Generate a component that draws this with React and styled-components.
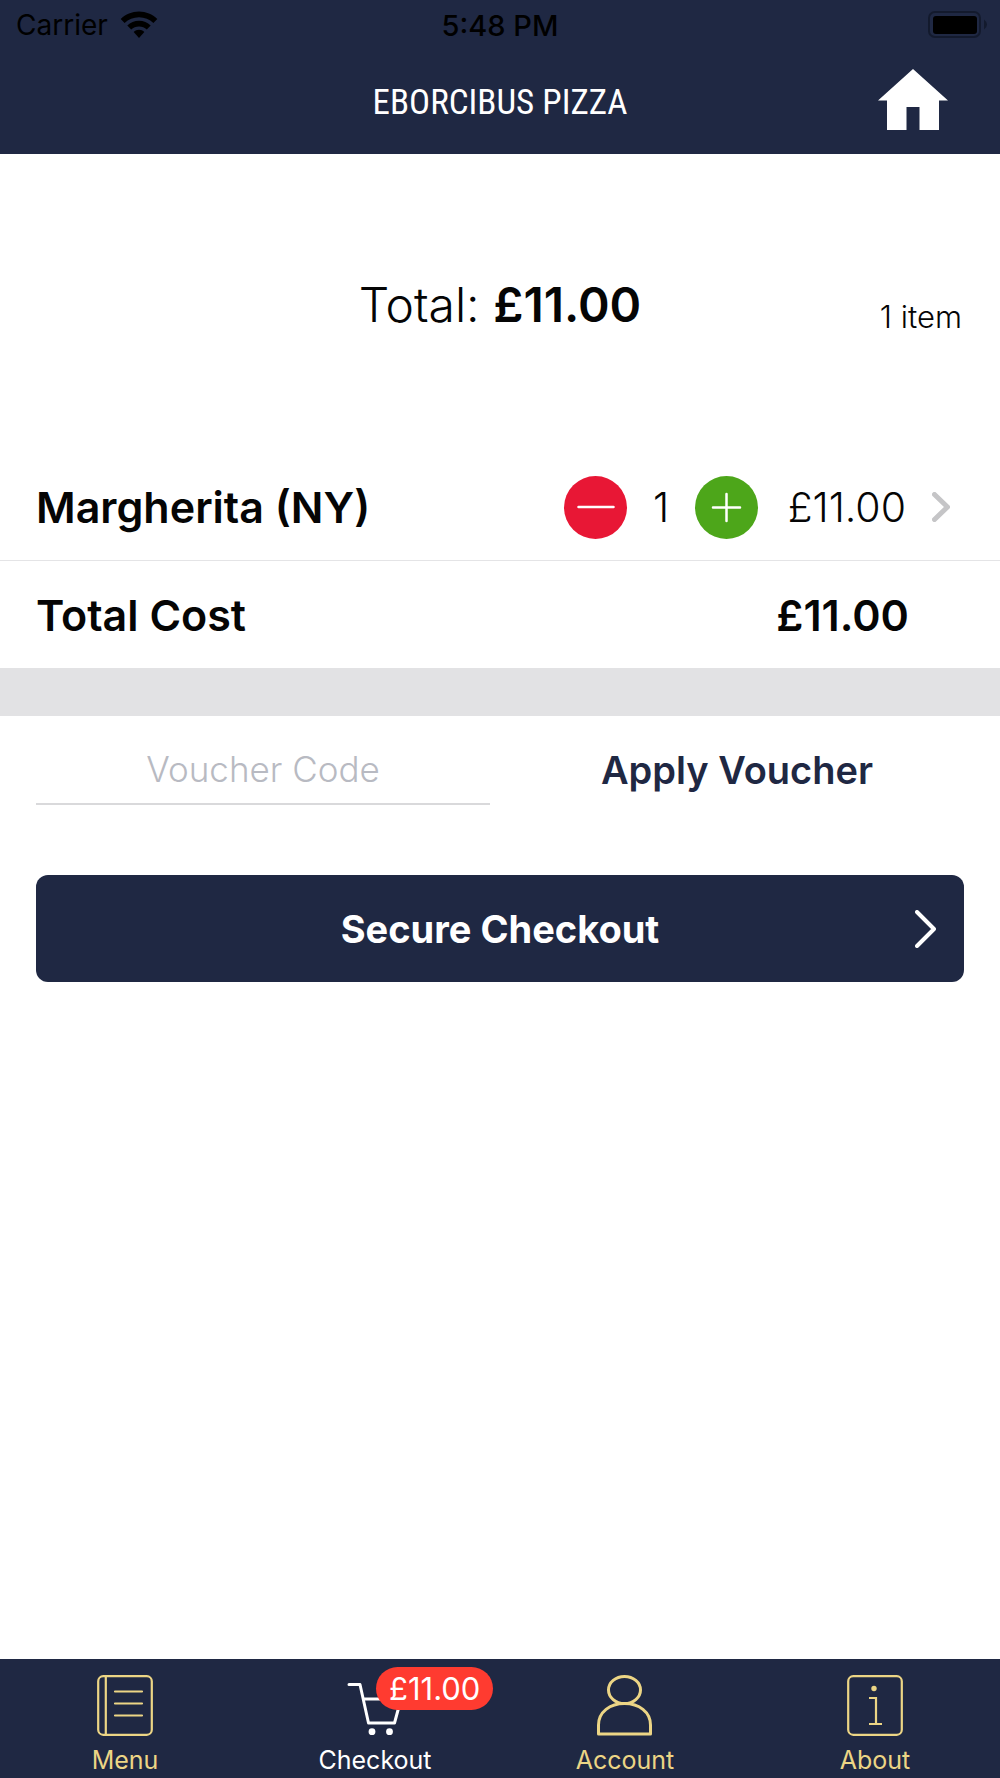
import React, { Component, Fragment } from 'react'
import styled, { createGlobalStyle } from 'styled-components'

const NAVY = '#1f2843'
const GOLD = '#ecd585'

const GlobalStyle = createGlobalStyle`
  * {
    box-sizing: border-box;
  }

  body {
    margin: 0;
    background-color: white;
    color: #050505;
    font-family: Inter, 'Liberation Sans', sans-serif;
  }

  button, input {
    font-family: inherit;
    border: none;
    padding: 0;
  }

  svg {
    display: block;
  }
`

const Screen = styled.div`
  display: flex;
  flex-direction: column;
  min-height: 100vh;
`

const Header = styled.header`
  background-color: ${NAVY};
`

const StatusBar = styled.div`
  display: grid;
  grid-template-columns: 1fr auto 1fr;
  align-items: center;
  height: 50px;
  padding: 0 12px;
  color: black;
  font-size: 28px;
`

const Carrier = styled.div`
  display: flex;
  align-items: center;
  gap: 12px;
  padding-left: 4px;
`

const Time = styled.div`
  font-size: 29px;
  font-weight: 500;
`

const Battery = styled.svg`
  justify-self: end;
`

const TitleBar = styled.div`
  display: grid;
  grid-template-columns: 1fr auto 1fr;
  align-items: center;
  height: 104px;
  padding: 0 52px;
`

const Title = styled.h1`
  grid-column: 2;
  margin: 0;
  color: white;
  font-family: 'Roboto Condensed', 'Liberation Sans Narrow', 'Liberation Sans', sans-serif;
  font-size: 35px;
  font-weight: 400;
`

const HomeLink = styled.a`
  justify-self: end;
`

const Main = styled.main`
  flex: 1;
`

const Summary = styled.section`
  display: grid;
  grid-template-columns: 1fr auto 1fr;
  align-items: end;
  height: 300px;
  padding: 0 38px 119px;
`

const SummaryTotal = styled.h2`
  grid-column: 2;
  margin: 0;
  font-size: 48px;
  line-height: 60px;
  font-weight: 300;
`

const SummaryCount = styled.div`
  justify-self: end;
  font-size: 31px;
  line-height: 36px;
  font-weight: 300;
`

const Strong = styled.strong`
  font-weight: 600;
`

const Row = styled.div`
  display: flex;
  align-items: center;
  height: 107px;
  padding: 0 ${props => props.$right}px 0 36px;
  border-bottom: ${props => (props.$line ? '1px solid #e4e4e6' : 'none')};
  font-size: 43px;
`

const RowName = styled.div`
  flex: 1;
  font-weight: 600;
`

const RoundButton = styled.button`
  display: flex;
  align-items: center;
  justify-content: center;
  width: 63px;
  height: 63px;
  border-radius: 50%;
  background-color: ${props => props.$color};
`

const Quantity = styled.output`
  width: 68px;
  text-align: center;
  font-size: 41px;
  font-weight: 300;
`

const Price = styled.div`
  width: 148px;
  text-align: right;
  font-size: 41px;
  font-weight: 300;
`

const DetailsButton = styled.button`
  margin-left: 26px;
  background: none;
`

const Divider = styled.div`
  height: 48px;
  background-color: #e2e2e4;
`

const VoucherForm = styled.form`
  display: grid;
  grid-template-columns: 1fr 1fr;
  gap: 20px;
  padding: 19px 36px 0;
`

const VoucherInput = styled.input`
  min-width: 0;
  height: 70px;
  border-bottom: 2px solid #d9d9db;
  text-align: center;
  font-size: 35px;
  font-weight: 300;
  outline: none;

  &::placeholder {
    color: #b8bac2;
    opacity: 1;
  }
`

const VoucherButton = styled.button`
  height: 70px;
  background: none;
  color: ${NAVY};
  font-size: 38px;
  font-weight: 600;
`

const CheckoutButton = styled.button`
  display: grid;
  grid-template-columns: 1fr auto 1fr;
  align-items: center;
  width: calc(100% - 72px);
  height: 107px;
  margin: 70px 36px 36px;
  padding: 0 28px;
  border-radius: 12px;
  background-color: ${NAVY};
  color: white;
  font-size: 38px;
  font-weight: 700;

  span {
    grid-column: 2;
  }

  svg {
    justify-self: end;
  }
`

const TabBar = styled.nav`
  display: grid;
  grid-template-columns: repeat(4, 1fr);
  height: 119px;
  background-color: ${NAVY};
`

const Tab = styled.a`
  display: flex;
  flex-direction: column;
  align-items: center;
  gap: 8px;
  padding-top: 16px;
  color: ${props => (props.$active ? 'white' : GOLD)};
  font-size: 25px;
  line-height: 32px;
  text-decoration: none;
`

const TabIcon = styled.div`
  position: relative;
`

const Badge = styled.span`
  position: absolute;
  top: -8px;
  left: 29px;
  padding: 0 13px;
  border-radius: 22px;
  background-color: #ff3b30;
  color: white;
  font-size: 31px;
  line-height: 43px;
`

const Wifi = () => (
  <svg width="38" height="28" viewBox="0 0 38 28" fill="black">
    <path d="M19 0.5C26 0.5 32.500 3.300 37.300 8L33.400 12C29.600 8.300 24.500 6.200 19 6.200S8.400 8.300 4.600 12L0.700 8C5.500 3.300 12 0.500 19 0.500Z" />
    <path d="M19 9.800C23.500 9.800 27.600 11.600 30.700 14.600L26.800 18.500C24.700 16.500 22 15.400 19 15.400S13.300 16.500 11.200 18.500L7.300 14.600C10.400 11.600 14.500 9.800 19 9.800Z" />
    <path d="M19 18.800C21 18.800 22.900 19.600 24.300 21L19 27L13.700 21C15.100 19.600 17 18.800 19 18.800Z" />
  </svg>
)

const HomeIcon = () => (
  <svg width="70" height="66" viewBox="0 0 70 66" fill="white">
    <path d="M35 0L70 31.500H61V61H41.500V38H28.500V61H9V31.500H0Z" />
  </svg>
)

const Chevron = ({ width, height, color, stroke }) => (
  <svg
    width={width}
    height={height}
    viewBox={`0 0 ${width} ${height}`}
    fill="none"
    stroke={color}
    strokeWidth={stroke}
    strokeLinecap="round"
    strokeLinejoin="round"
  >
    <path d={`M${stroke / 2} ${stroke / 2}L${width - stroke / 2} ${height / 2}L${stroke / 2} ${height - stroke / 2}`} />
  </svg>
)

const MenuIcon = () => (
  <svg width="56" height="61" viewBox="0 0 56 61" fill="none" stroke={GOLD} strokeWidth="2.2" strokeLinecap="round">
    <rect x="1.200" y="1.200" width="53.600" height="58.600" rx="5" />
    <path d="M8.800 1.500V59.500M18 16.500H45M18 28.500H45M18 40.500H45" />
  </svg>
)

const CartIcon = () => (
  <svg width="56" height="61" viewBox="0 0 56 61" fill="none" stroke="white" strokeWidth="3" strokeLinecap="round" strokeLinejoin="round">
    <path d="M2 9.500H13L21.500 48H47.500L54 24H16.500" />
    <circle cx="25" cy="56.700" r="3.400" fill="white" stroke="none" />
    <circle cx="42.500" cy="56.700" r="3.400" fill="white" stroke="none" />
  </svg>
)

const AccountIcon = () => (
  <svg width="56" height="61" viewBox="0 0 56 61" fill="none" stroke={GOLD} strokeWidth="3" strokeLinejoin="round">
    <ellipse cx="27.500" cy="15" rx="16" ry="13.500" />
    <path d="M1.500 59V50C1.500 37 13 28.500 27.500 28.500S53.500 37 53.500 50V59Z" />
  </svg>
)

const AboutIcon = () => (
  <svg width="56" height="61" viewBox="0 0 56 61" fill="none" stroke={GOLD} strokeWidth="2.2">
    <rect x="1.200" y="1.200" width="53.600" height="58.600" rx="5" />
    <circle cx="27" cy="13.500" r="2.700" fill={GOLD} stroke="none" />
    <path d="M22 23H29V49M22 49H35" />
  </svg>
)

class App extends Component {
  state = {
    quantity: 1,
    voucher: '',
  }

  changeQuantity = (step) => {
    this.setState({ quantity: Math.max(0, this.state.quantity + step) })
  }

  render() {
    const { quantity, voucher } = this.state
    const total = `£${(quantity * 11).toFixed(2)}`

    return (
      <Fragment>
        <GlobalStyle />
        <Screen>
          <Header>
            <StatusBar>
              <Carrier>
                Carrier
                <Wifi />
              </Carrier>
              <Time>5:48 PM</Time>
              <Battery width="60" height="28" viewBox="0 0 60 28">
                <rect x="1" y="1" width="51" height="25" rx="6" fill="none" stroke="#131a2d" strokeWidth="2" />
                <rect x="5" y="5" width="44" height="18" rx="3" fill="black" />
                <path d="M56 8.500Q59 11 59 13.500T56 18.500Z" fill="#131a2d" />
              </Battery>
            </StatusBar>
            <TitleBar>
              <Title>EBORCIBUS PIZZA</Title>
              <HomeLink href="#home" aria-label="Home">
                <HomeIcon />
              </HomeLink>
            </TitleBar>
          </Header>

          <Main>
            <Summary>
              <SummaryTotal>
                Total: <Strong>{total}</Strong>
              </SummaryTotal>
              <SummaryCount>{quantity} {quantity === 1 ? 'item' : 'items'}</SummaryCount>
            </Summary>

            <Row $right={50} $line>
              <RowName>Margherita (NY)</RowName>
              <RoundButton $color="#e81735" aria-label="Remove one" onClick={() => this.changeQuantity(-1)}>
                <svg width="38" height="4" viewBox="0 0 38 4" stroke="white" strokeWidth="2.500" strokeLinecap="round">
                  <path d="M1.500 2H36.500" />
                </svg>
              </RoundButton>
              <Quantity>{quantity}</Quantity>
              <RoundButton $color="#4da61a" aria-label="Add one" onClick={() => this.changeQuantity(1)}>
                <svg width="31" height="31" viewBox="0 0 31 31" stroke="white" strokeWidth="2.500" strokeLinecap="round">
                  <path d="M2 15.500H29M15.500 2V29" />
                </svg>
              </RoundButton>
              <Price>{total}</Price>
              <DetailsButton aria-label="Item details">
                <Chevron width={18} height={30} color="#c5c5c7" stroke={5} />
              </DetailsButton>
            </Row>
            <Row $right={91}>
              <RowName>Total Cost</RowName>
              <Strong>{total}</Strong>
            </Row>
            <Divider />

            <VoucherForm onSubmit={e => e.preventDefault()}>
              <VoucherInput
                aria-label="Voucher Code"
                placeholder="Voucher Code"
                value={voucher}
                onChange={e => this.setState({ voucher: e.target.value })}
              />
              <VoucherButton type="submit">Apply Voucher</VoucherButton>
            </VoucherForm>
            <CheckoutButton>
              <span>Secure Checkout</span>
              <Chevron width={21} height={38} color="white" stroke={4} />
            </CheckoutButton>
          </Main>

          <TabBar>
            <Tab href="#menu">
              <TabIcon><MenuIcon /></TabIcon>
              Menu
            </Tab>
            <Tab href="#checkout" $active>
              <TabIcon>
                <CartIcon />
                <Badge>{total}</Badge>
              </TabIcon>
              Checkout
            </Tab>
            <Tab href="#account">
              <TabIcon><AccountIcon /></TabIcon>
              Account
            </Tab>
            <Tab href="#about">
              <TabIcon><AboutIcon /></TabIcon>
              About
            </Tab>
          </TabBar>
        </Screen>
      </Fragment>
    )
  }
}

export default App
